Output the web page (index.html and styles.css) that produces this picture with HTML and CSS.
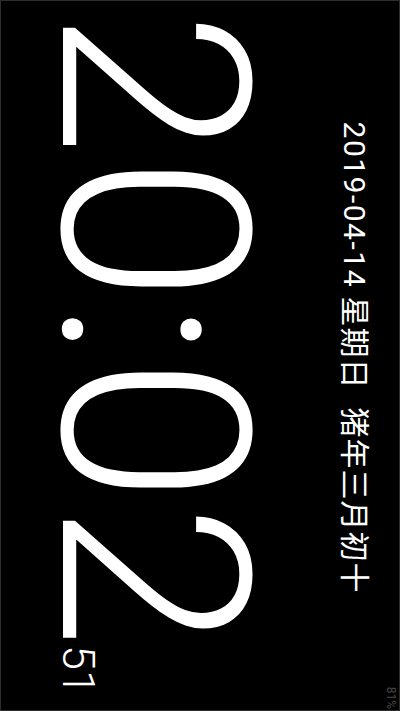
FILE: index.html
```html
<!DOCTYPE html>
<html lang="zh-CN">
<head>
  <meta charset="UTF-8" />
  <meta name="viewport" content="width=device-width, initial-scale=1.0"/>
  <title>Clock</title>
  <link rel="stylesheet" href="styles.css">
</head>
<body>

  <div class="clock">
    <div class="status">81%</div>
    <div class="date"><span class="ymd">2019-04-14</span> 星期日<span class="lunar">猪年三月初十</span></div>
    <div class="time">20:02<span class="sec">51</span></div>
  </div>

</body>
</html>
```

FILE: styles.css
```css
* {
  margin: 0;
  padding: 0;
  box-sizing: border-box;
}

html, body {
  height: 100%;
  background: #000;
  overflow: hidden;
}

body {
  border: 1px solid #2e2e2e;
  font-family: 'Roboto', 'Noto Sans CJK SC', sans-serif;
  color: #fff;
}

/* landscape clock, turned to stand on the right edge */
.clock {
  width: 709px;
  height: 398px;
  display: flex;
  flex-direction: column;
  align-items: center;
  transform-origin: top left;
  transform: translateX(398px) rotate(90deg);
}

.status {
  align-self: flex-end;
  height: 16px;
  margin-right: 1px;
  font-size: 12px;
  line-height: 16px;
  color: #4a4a4a;
}

.date {
  margin-top: 14px;
  margin-left: 4px;
  font-size: 30px;
  line-height: 30px;
  letter-spacing: 1px;
  white-space: nowrap;
}

.ymd {
  letter-spacing: 1.5px;
}

.lunar {
  margin-left: 18px;
}

.time {
  margin-top: 55px;
  margin-left: -6px;
  font-size: 263px;
  font-weight: 300;
  line-height: 1;
  white-space: nowrap;
}

.sec {
  font-size: 45px;
  margin-left: -4px;
}
```
